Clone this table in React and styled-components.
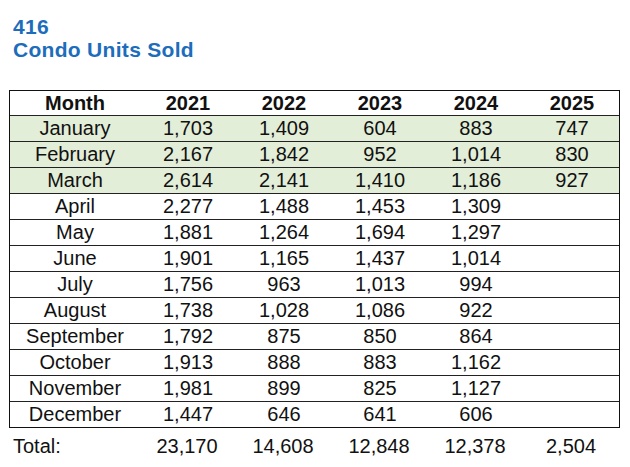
import React from "react";
import styled, { createGlobalStyle } from "styled-components";

const GlobalStyle = createGlobalStyle`
  html, body {
    margin: 0;
    padding: 0;
    background: #ffffff;
  }
  body {
    font-family: "Liberation Sans", Arial, sans-serif;
    color: #111111;
  }
`;

const Page = styled.div`
  width: 630px;
  height: 467px;
  padding: 15px 0 0 9px;
  box-sizing: border-box;
  overflow: hidden;
`;

const Title = styled.h1`
  margin: 0 0 29px 4px;
  font-size: 21px;
  letter-spacing: 0.3px;
  line-height: 23px;
  font-weight: 700;
  color: #1c6dbb;
`;

const Table = styled.div`
  width: 611px;
  border: 1px solid #111;
  box-sizing: border-box;
`;

const cols = "130px repeat(5, 96px)";

const Row = styled.div`
  display: grid;
  grid-template-columns: ${cols};
  height: 25px;
  line-height: 25px;
  font-size: 20px;
  background: ${(p) => (p.$shaded ? "#e3eed8" : "#ffffff")};
  border-bottom: ${(p) => (p.$last ? "none" : "1px solid #222")};
  font-weight: ${(p) => (p.$head ? 700 : 400)};
  &:first-child {
    height: 24px;
    line-height: 24px;
  }
`;

const Cell = styled.div`
  text-align: center;
  white-space: nowrap;
`;

const TotalRow = styled.div`
  display: grid;
  grid-template-columns: ${cols};
  height: 37px;
  line-height: 37px;
  font-size: 20px;
`;

const TotalLabel = styled.div`
  padding-left: 4px;
  text-align: left;
`;

const years = ["2021", "2022", "2023", "2024", "2025"];

const rows = [
  ["January", "1,703", "1,409", "604", "883", "747"],
  ["February", "2,167", "1,842", "952", "1,014", "830"],
  ["March", "2,614", "2,141", "1,410", "1,186", "927"],
  ["April", "2,277", "1,488", "1,453", "1,309", ""],
  ["May", "1,881", "1,264", "1,694", "1,297", ""],
  ["June", "1,901", "1,165", "1,437", "1,014", ""],
  ["July", "1,756", "963", "1,013", "994", ""],
  ["August", "1,738", "1,028", "1,086", "922", ""],
  ["September", "1,792", "875", "850", "864", ""],
  ["October", "1,913", "888", "883", "1,162", ""],
  ["November", "1,981", "899", "825", "1,127", ""],
  ["December", "1,447", "646", "641", "606", ""],
];

const totals = ["23,170", "14,608", "12,848", "12,378", "2,504"];

export default function App() {
  return (
    <Page>
      <GlobalStyle />
      <Title>
        416
        <br />
        Condo Units Sold
      </Title>
      <Table>
        <Row $head>
          <Cell>Month</Cell>
          {years.map((y) => (
            <Cell key={y}>{y}</Cell>
          ))}
        </Row>
        {rows.map((r, i) => (
          <Row key={r[0]} $shaded={r[5] !== ""} $last={i === rows.length - 1}>
            {r.map((v, j) => (
              <Cell key={j}>{v}</Cell>
            ))}
          </Row>
        ))}
      </Table>
      <TotalRow>
        <TotalLabel>Total:</TotalLabel>
        {totals.map((t) => (
          <Cell key={t}>{t}</Cell>
        ))}
      </TotalRow>
    </Page>
  );
}
